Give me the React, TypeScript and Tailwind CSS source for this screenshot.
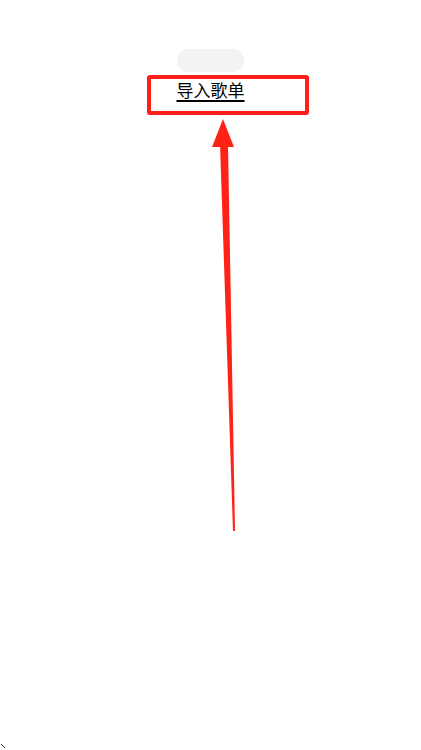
import React from 'react';

function AnnotationArrow() {
  return (
    <svg
      className="pointer-events-none absolute left-0 top-0"
      width="421"
      height="750"
      viewBox="0 0 421 750"
    >
      <polygon points="220,144 228,144 235,531 233,531" fill="#ff2216" />
      <polygon points="223,119 212,147 234,147" fill="#ff2216" />
      <path d="M1 744 L5 748" stroke="#333" strokeWidth="1" />
    </svg>
  );
}

export default function App() {
  return (
    <div className="relative h-[750px] w-full overflow-hidden bg-white font-['Noto_Sans_CJK_SC',sans-serif]">
      <div className="flex flex-col items-center pt-[49px]">
        <div className="h-[23px] w-[67px] rounded-full bg-[#f3f3f3]" />
        <a
          href="#"
          className="mt-[6px] text-[17px] leading-[24px] text-black underline decoration-[1.5px] underline-offset-[3px]"
        >
          导入歌单
        </a>
      </div>

      {/* annotation box */}
      <div className="pointer-events-none absolute left-[147px] top-[75px] h-[40px] w-[162px] rounded-[3px] border-4 border-[#ff1f18]" />
      <AnnotationArrow />
    </div>
  );
}
